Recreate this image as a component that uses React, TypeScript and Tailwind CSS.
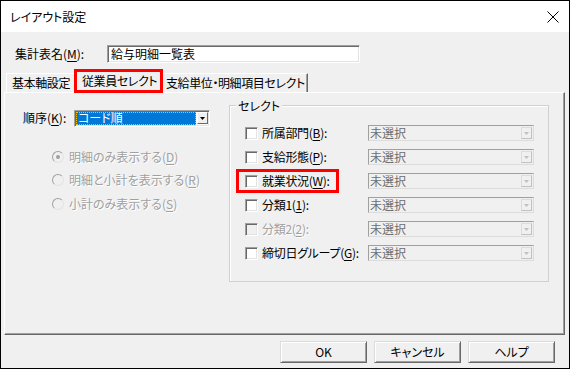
import type { ReactNode } from 'react'

const FONT = "font-['Noto_Sans_CJK_JP','Noto_Sans',sans-serif] [font-feature-settings:'palt']"

function U({ children }: { children: ReactNode }) {
  return <span className="underline underline-offset-2">{children}</span>
}

function Sunken({ className = '', children }: { className?: string; children?: ReactNode }) {
  return (
    <div className={`border border-t-[#a0a0a0] border-l-[#a0a0a0] border-b-white border-r-white shadow-[inset_1px_1px_0_#696969,inset_-1px_-1px_0_#e3e3e3] ${className}`}>
      {children}
    </div>
  )
}

function Button({ label }: { label: string }) {
  return (
    <button className="w-[87px] h-[22px] border border-t-[#dcdcdc] border-l-[#dcdcdc] border-b-[#696969] border-r-[#696969] bg-[#f0f0f0] shadow-[inset_1px_1px_0_#fff,inset_-1px_-1px_0_#a0a0a0] text-[12px] leading-none text-black">
      {label}
    </button>
  )
}

function Checkbox({ disabled }: { disabled?: boolean }) {
  return (
    <Sunken className={`w-[13px] h-[13px] shrink-0 ${disabled ? 'bg-[#f0f0f0]' : 'bg-white'}`} />
  )
}

function Radio({ checked, label }: { checked?: boolean; label: ReactNode }) {
  return (
    <div className="flex items-center h-[23.5px]">
      <div className="w-[12px] h-[12px] rounded-full border border-[#a0a0a0] border-b-[#e3e3e3] border-r-[#e3e3e3] bg-[#f0f0f0] flex items-center justify-center">
        {checked && <div className="w-[4px] h-[4px] rounded-full bg-[#a0a0a0]" />}
      </div>
      <span className="ml-[5px] text-[12px] text-[#a0a0a0] [text-shadow:1px_1px_0_#fff]">{label}</span>
    </div>
  )
}

function DisabledCombo() {
  return (
    <div className="w-[166px] h-[16px] border border-[#a0a0a0] border-b-[#dcdcdc] border-r-[#dcdcdc] bg-[#f0f0f0] flex items-center">
      <span className="flex-1 pl-[1px] text-[12px] leading-none text-[#6d6d6d]">未選択</span>
      <div className="w-[11px] h-[12px] mr-[1px] border border-[#dcdcdc] border-b-[#c0c0c0] border-r-[#c0c0c0] flex items-center justify-center">
        <svg width="5" height="3" viewBox="0 0 5 3"><path d="M0 0h5L2.5 3z" fill="#c0c0c0" /></svg>
      </div>
    </div>
  )
}

const ROWS: { label: ReactNode; disabled?: boolean; mark?: boolean }[] = [
  { label: <>所属部門(<U>B</U>):</> },
  { label: <>支給形態(<U>P</U>):</> },
  { label: <>就業状況(<U>W</U>):</>, mark: true },
  { label: <>分類1(<U>1</U>):</> },
  { label: <>分類2(<U>2</U>):</>, disabled: true },
  { label: <>締切日グループ(<U>G</U>):</> },
]

export default function App() {
  return (
    <div className={`w-[570px] h-[369px] border border-black bg-[#f0f0f0] flex flex-col text-black ${FONT}`}>
      {/* title bar */}
      <div className="h-[31px] bg-white flex items-center justify-between pl-[9px] pr-[9px] shrink-0">
        <span className="text-[12px]">レイアウト設定</span>
        <svg width="12" height="12" viewBox="0 0 12 12" className="mr-[1px]">
          <path d="M0.5 0.5L11.5 11.5M11.5 0.5L0.5 11.5" stroke="#000" strokeWidth="1" />
        </svg>
      </div>

      {/* name */}
      <div className="flex items-center mt-[13px] pl-[14px]">
        <span className="w-[92px] text-[12px]">集計表名(<U>M</U>):</span>
        <Sunken className="w-[253px] h-[18px] bg-white flex items-center pl-[3px]">
          <span className="text-[12px] leading-none">給与明細一覧表</span>
        </Sunken>
      </div>

      {/* tabs */}
      <div className="flex items-end h-[23px] mt-[6px] ml-[5px] relative z-10 text-[12px] tracking-[-0.4px] whitespace-nowrap">
        <div className="w-[68px] h-[19px] border-t border-l border-white flex items-center pl-[5px]">
          基本軸設定
        </div>
        <div className="relative w-[89px] h-[23px] bg-[#f0f0f0] border-t border-l border-white border-r border-r-[#696969] flex items-center pl-[7px] pb-[1px]">
          従業員セレクト
          <div className="absolute left-[-1px] top-[-1px] w-[89px] h-[24px] border-[3px] border-[#ff0000]" />
        </div>
        <div className="w-[145px] h-[19px] border-t border-white border-r border-r-[#696969] shadow-[inset_-1px_0_0_#a0a0a0] flex items-center pl-[3px]">
          支給単位・明細項目セレクト
        </div>
      </div>

      {/* tab page */}
      <div className="ml-[3px] w-[561px] h-[243px] border border-t-white border-l-white border-b-[#696969] border-r-[#696969] shadow-[inset_-1px_-1px_0_#a0a0a0] flex items-start shrink-0">
        {/* left column */}
        <div className="ml-[18px] w-[206px] mt-[16px]">
          <div className="flex items-center">
            <span className="w-[51px] text-[12px]">順序(<U>K</U>):</span>
            <Sunken className="w-[136px] h-[17px] bg-white flex items-center p-[1px]">
              <div className="flex-1 h-full bg-[#0078d7] outline-1 outline-dotted outline-[#f5c000] -outline-offset-1 flex items-center pl-[2px]">
                <span className="text-[12px] leading-none text-white">コード順</span>
              </div>
              <div className="w-[11px] h-[12px] ml-[1px] border border-t-white border-l-white border-b-[#696969] border-r-[#696969] bg-[#f0f0f0] flex items-center justify-center">
                <svg width="5" height="3" viewBox="0 0 5 3"><path d="M0 0h5L2.5 3z" fill="#000" /></svg>
              </div>
            </Sunken>
          </div>
          <div className="mt-[18px] ml-[29px]">
            <Radio checked label={<>明細のみ表示する(<U>D</U>)</>} />
            <Radio label={<>明細と小計を表示する(<U>R</U>)</>} />
            <Radio label={<>小計のみ表示する(<U>S</U>)</>} />
          </div>
        </div>

        {/* group box */}
        <div className="relative mt-[12px] w-[320px] h-[177px] border border-[#d0d0d0] shadow-[inset_1px_1px_0_#fff] pt-[15px] pl-[15px]">
          <span className="absolute left-[6px] top-[-9px] px-[2px] bg-[#f0f0f0] text-[12px]">セレクト</span>
          {ROWS.map((r, i) => (
            <div key={i} className="relative flex items-center h-[24px]">
              <Checkbox disabled={r.disabled} />
              <span className={`ml-[4px] w-[106px] text-[12px] tracking-[-0.3px] whitespace-nowrap ${r.disabled ? 'text-[#a0a0a0] [text-shadow:1px_1px_0_#fff]' : ''}`}>
                {r.label}
              </span>
              <DisabledCombo />
              {r.mark && <div className="absolute left-[-9px] top-0 w-[103px] h-[24px] border-[3px] border-[#ff0000]" />}
            </div>
          ))}
        </div>
      </div>

      {/* buttons */}
      <div className="flex justify-end gap-[7px] mt-[6px] pr-[14px]">
        <Button label="OK" />
        <Button label="キャンセル" />
        <Button label="ヘルプ" />
      </div>
    </div>
  )
}
